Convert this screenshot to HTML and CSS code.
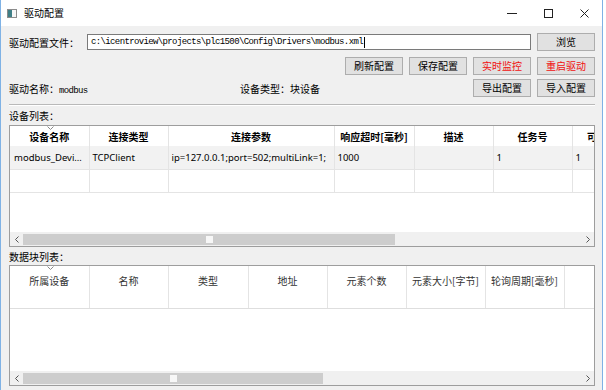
FILE: index.html
```html
<!DOCTYPE html>
<html lang="zh-CN">
<head>
    <meta charset="UTF-8">
    <meta name="viewport" content="width=device-width, initial-scale=1.0">
    <title>驱动配置</title>
    <link rel="stylesheet" href="styles.css">
</head>
<body>
    <div class="window">
        <div class="titlebar">
            <span class="app-icon"><span class="app-icon-side"></span></span>
            <span class="title">驱动配置</span>
            <div class="win-controls">
                <span class="win-btn">
                    <svg width="10" height="10" viewBox="0 0 10 10"><path d="M0 5.5h10" stroke="#222" stroke-width="1"/></svg>
                </span>
                <span class="win-btn">
                    <svg width="9" height="9" viewBox="0 0 9 9"><rect x="0.5" y="0.5" width="8" height="8" fill="none" stroke="#222" stroke-width="1"/></svg>
                </span>
                <span class="win-btn">
                    <svg width="9" height="9" viewBox="0 0 9 9"><path d="M0.5 0.5l8 8M8.5 0.5l-8 8" stroke="#222" stroke-width="1"/></svg>
                </span>
            </div>
        </div>

        <div class="content">
            <div class="row file-row">
                <span class="label">驱动配置文件：</span>
                <div class="path-input">c:\icentroview\projects\plc1500\Config\Drivers\modbus.xml<span class="caret"></span></div>
                <button class="btn">浏览</button>
            </div>

            <div class="row actions-row">
                <button class="btn">刷新配置</button>
                <button class="btn">保存配置</button>
                <button class="btn btn-red">实时监控</button>
                <button class="btn btn-red">重启驱动</button>
            </div>

            <div class="row info-row">
                <span class="info driver-name">驱动名称：<span class="mono">modbus</span></span>
                <span class="info">设备类型：块设备</span>
                <span class="spacer"></span>
                <button class="btn">导出配置</button>
                <button class="btn">导入配置</button>
            </div>

            <div class="separator"></div>

            <div class="section-label">设备列表：</div>
            <div class="grid-box device-box">
                <div class="grid-view">
                    <table class="grid device-grid">
                        <colgroup>
                            <col style="width:79px"><col style="width:79px"><col style="width:166px">
                            <col style="width:80px"><col style="width:79px"><col style="width:79px"><col style="width:80px">
                        </colgroup>
                        <thead>
                            <tr>
                                <th>设备名称<span class="sort-mark"><svg width="7" height="4" viewBox="0 0 7 4"><path d="M0.5 0.5l3 3 3-3" fill="none" stroke="#8a8a8a" stroke-width="1"/></svg></span></th>
                                <th>连接类型</th>
                                <th>连接参数</th>
                                <th>响应超时[毫秒]</th>
                                <th>描述</th>
                                <th>任务号</th>
                                <th>可写入状态</th>
                            </tr>
                        </thead>
                        <tbody>
                            <tr class="current">
                                <td>modbus_Device1</td>
                                <td>TCPClient</td>
                                <td>ip=127.0.0.1;port=502;multiLink=1;</td>
                                <td>1000</td>
                                <td></td>
                                <td>1</td>
                                <td>1</td>
                            </tr>
                            <tr>
                                <td></td><td></td><td></td><td></td><td></td><td></td><td></td>
                            </tr>
                        </tbody>
                    </table>
                </div>
                <div class="hscroll">
                    <span class="scroll-arrow"><svg width="4" height="7" viewBox="0 0 4 7"><path d="M3.5 0.5l-3 3 3 3" fill="none" stroke="#555" stroke-width="1"/></svg></span>
                    <span class="scroll-thumb" style="width:372px"><span class="thumb-grip"></span></span>
                    <span class="scroll-track"></span>
                    <span class="scroll-arrow"><svg width="4" height="7" viewBox="0 0 4 7"><path d="M0.5 0.5l3 3-3 3" fill="none" stroke="#555" stroke-width="1"/></svg></span>
                </div>
            </div>

            <div class="section-label block-label">数据块列表：</div>
            <div class="grid-box block-box">
                <div class="grid-view">
                    <table class="grid block-grid">
                        <colgroup>
                            <col style="width:79px"><col style="width:79px"><col style="width:80px"><col style="width:79px">
                            <col style="width:79px"><col style="width:79px"><col style="width:79px"><col style="width:80px">
                        </colgroup>
                        <thead>
                            <tr>
                                <th>所属设备<span class="sort-mark"><svg width="7" height="4" viewBox="0 0 7 4"><path d="M0.5 0.5l3 3 3-3" fill="none" stroke="#8a8a8a" stroke-width="1"/></svg></span></th>
                                <th>名称</th>
                                <th>类型</th>
                                <th>地址</th>
                                <th>元素个数</th>
                                <th>元素大小[字节]</th>
                                <th>轮询周期[毫秒]</th>
                                <th>状态</th>
                            </tr>
                        </thead>
                    </table>
                </div>
                <div class="hscroll">
                    <span class="scroll-arrow"><svg width="4" height="7" viewBox="0 0 4 7"><path d="M3.5 0.5l-3 3 3 3" fill="none" stroke="#555" stroke-width="1"/></svg></span>
                    <span class="scroll-thumb" style="width:300px"><span class="thumb-grip"></span></span>
                    <span class="scroll-track"></span>
                    <span class="scroll-arrow"><svg width="4" height="7" viewBox="0 0 4 7"><path d="M0.5 0.5l3 3-3 3" fill="none" stroke="#555" stroke-width="1"/></svg></span>
                </div>
            </div>
        </div>
    </div>
</body>
</html>
```

FILE: styles.css
```css
* {
    box-sizing: border-box;
}

body {
    margin: 0;
    background: #ffffff;
    font-family: "Noto Sans CJK SC", sans-serif;
    font-size: 10px;
    color: #000;
}

.window {
    width: 603px;
    height: 390px;
    border-left: 1px solid #7fb2e5;
    border-right: 1px solid #7fb2e5;
    background: #f0f0f0;
    display: flex;
    flex-direction: column;
    overflow: hidden;
}

/* title bar */
.titlebar {
    height: 26px;
    flex: 0 0 26px;
    background: #ffffff;
    display: flex;
    align-items: center;
    padding-left: 6px;
}

.app-icon {
    width: 10px;
    height: 9px;
    border: 1px solid #8c8c8c;
    background: #f6f6f6;
    display: flex;
}

.app-icon-side {
    width: 4px;
    height: 100%;
    background: #3f7f86;
}

.title {
    margin-left: 7px;
    line-height: 14px;
}

.win-controls {
    margin-left: auto;
    display: flex;
    height: 100%;
}

.win-btn {
    width: 36px;
    display: flex;
    align-items: center;
    justify-content: center;
}

/* form area */
.content {
    flex: 1;
    padding: 7px 7px 0 8px;
    display: flex;
    flex-direction: column;
}

.row {
    display: flex;
    align-items: center;
    height: 18px;
    gap: 6px;
}

.actions-row {
    margin-top: 6px;
    justify-content: flex-end;
}

.info-row {
    margin-top: 4px;
}

.label {
    width: 70px;
    margin-right: 2px;
    white-space: nowrap;
}

.path-input {
    flex: 1;
    height: 16px;
    background: #ffffff;
    border: 1px solid #7a7a7a;
    padding-left: 3px;
    display: flex;
    align-items: center;
    font-family: "Liberation Mono", monospace;
    font-size: 9px;
    letter-spacing: -0.63px;
    white-space: nowrap;
    overflow: hidden;
}

.caret {
    width: 1px;
    height: 11px;
    margin-left: 1px;
    background: #000;
}

.btn {
    width: 58px;
    height: 18px;
    padding: 0;
    border: 1px solid #adadad;
    background: #e1e1e1;
    font-family: "Noto Sans CJK SC", sans-serif;
    font-size: 10px;
    line-height: 16px;
    color: #000;
}

.btn-red {
    color: #f01010;
}

.info {
    white-space: nowrap;
}

.driver-name {
    width: 225px;
}

.mono {
    font-family: "Liberation Mono", monospace;
    font-size: 9px;
    letter-spacing: -0.63px;
}

.spacer {
    flex: 1;
}

.separator {
    margin-top: 7px;
    height: 2px;
    border-top: 1px solid #b9b9b9;
    border-bottom: 1px solid #ffffff;
}

.section-label {
    margin-top: 3px;
    height: 14px;
    line-height: 14px;
}

.block-label {
    margin-top: 3px;
}

/* grids */
.grid-box {
    margin-top: 2px;
    border: 1px solid #9d9d9d;
    background: #ffffff;
    display: flex;
    flex-direction: column;
}

.device-box {
    height: 122px;
}

.block-box {
    margin-top: 1px;
    height: 121px;
}

.grid-view {
    flex: 1;
    overflow: hidden;
}

.grid {
    border-collapse: collapse;
    table-layout: fixed;
}

.device-grid {
    width: 642px;
}

.block-grid {
    width: 634px;
}

.grid th,
.grid td {
    white-space: nowrap;
    overflow: hidden;
    border-right: 1px solid #e4e4e4;
}

.grid th {
    position: relative;
    padding: 0 2px;
    text-align: center;
    background: #ffffff;
}

.device-grid th {
    height: 20px;
    font-weight: bold;
}

.block-grid th {
    height: 42px;
    vertical-align: top;
    padding-top: 7px;
    font-weight: normal;
    color: #333;
    border-bottom: 1px solid #dedede;
}

.grid td {
    height: 23px;
    padding: 0 0 0 3px;
    font-family: "Noto Sans", sans-serif;
    font-size: 9.5px;
    text-overflow: ellipsis;
    border-bottom: 1px solid #e4e4e4;
}

.grid td:first-child {
    padding: 0 5px 0 4px;
}

.grid tr.current td {
    background: #f2f2f2;
}

.sort-mark {
    position: absolute;
    top: 0;
    left: 37px;
    line-height: 0;
}

/* horizontal scroll bar */
.hscroll {
    height: 14px;
    flex: 0 0 14px;
    display: flex;
    align-items: center;
    background: #f0f0f0;
}

.scroll-arrow {
    width: 13px;
    display: flex;
    justify-content: center;
}

.scroll-thumb {
    height: 11px;
    background: #cdcdcd;
    display: flex;
    align-items: center;
    justify-content: center;
}

.thumb-grip {
    width: 7px;
    height: 7px;
    background: #f7f7f7;
}

.scroll-track {
    flex: 1;
}
```
